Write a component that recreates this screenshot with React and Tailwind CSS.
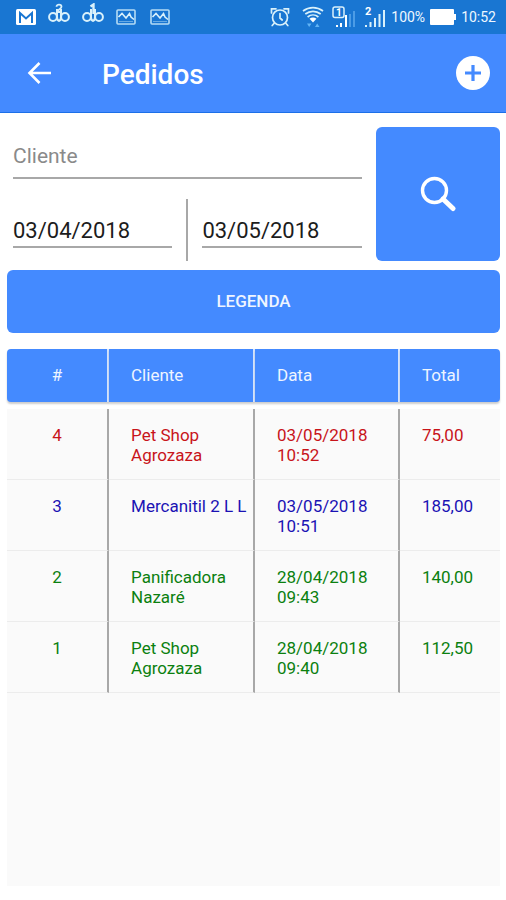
import React from "react";

const orders = [
  { id: "4", client: "Pet Shop Agrozaza", date: "03/05/2018 10:52", total: "75,00", tone: "text-[#c8141a]" },
  { id: "3", client: "Mercanitil 2 L L", date: "03/05/2018 10:51", total: "185,00", tone: "text-[#1a12b4]" },
  { id: "2", client: "Panificadora Nazaré", date: "28/04/2018 09:43", total: "140,00", tone: "text-[#0b800f]" },
  { id: "1", client: "Pet Shop Agrozaza", date: "28/04/2018 09:40", total: "112,50", tone: "text-[#0b800f]" },
];

function MailIcon() {
  return (
    <svg className="h-4 w-5" viewBox="0 0 20 16" aria-hidden="true">
      <rect width="20" height="16" rx="1.5" fill="#fff" />
      <path d="M4 14V4l6 5.500L16 4v10" fill="none" stroke="#1976d2" strokeWidth="2" />
    </svg>
  );
}

function LoopIcon({ variant }) {
  return (
    <svg className="h-5 w-[22px]" viewBox="0 0 22 20" fill="none" stroke="#d9f1fb" strokeWidth="2" aria-hidden="true">
      <circle cx="5" cy="14" r="3.900" />
      <circle cx="17" cy="14" r="3.900" />
      <path d="M9 6v8c0 2.600 1 3.900 2.500 3.900M13 6v8c0 2.600-1 3.900-2.500 3.900" />
      {variant === "one" ? (
        <path d="M8.500 3.500 11.500 1.500V11" strokeWidth="2.400" />
      ) : (
        <path d="M8.500 3.800c0-3 5-3 5 0 0 2-3.500 2.700-4.500 5.200h5" strokeWidth="1.800" />
      )}
    </svg>
  );
}

function PictureIcon() {
  return (
    <svg className="h-4 w-5" viewBox="0 0 20 16" fill="none" stroke="#b5dcf5" strokeWidth="1.600" aria-hidden="true">
      <rect x="1" y="1" width="18" height="14" rx="1" />
      <path d="M2.500 8 6 4.500l4 4.500 3.500-4.500 1.500 3.500 3 2.500" stroke="#d9f1fb" />
      <path d="M3 12.500h14" strokeWidth="1" opacity=".5" />
    </svg>
  );
}

function AlarmIcon() {
  return (
    <svg className="h-5 w-5" viewBox="0 0 20 20" fill="none" stroke="#d9f1fb" strokeWidth="1.700" strokeLinecap="round" aria-hidden="true">
      <circle cx="10" cy="10.500" r="7.500" />
      <path d="M10 6.500v4.500l2.200 2M1.500 6V1.800H6M18.500 6V1.800H14M4 16.500l-1.800 2M16 16.500l1.800 2" />
    </svg>
  );
}

function WifiIcon() {
  return (
    <svg className="h-[22px] w-[22px]" viewBox="0 0 22 22" fill="none" stroke="#d9f1fb" strokeWidth="1.700" aria-hidden="true">
      <path d="M1 5c6-4.500 14-4.500 20 0M3.300 8c4.600-3.600 10.800-3.600 15.400 0M5.600 11c3.200-2.700 7.600-2.700 10.800 0" />
      <path d="M7.500 12.800c2.200-1.600 4.800-1.600 7 0L11 16.500z" fill="#fff" stroke="none" />
      <path d="M5 17.500h4.500L7.200 21zM13 21l2.200-3.500 2.300 3.500z" fill="#62b4f5" stroke="none" />
    </svg>
  );
}

function SignalOneIcon() {
  return (
    <svg className="h-[22px] w-6" viewBox="0 0 24 22" aria-hidden="true">
      <rect x="1" y="1" width="11" height="10.500" rx="2" fill="none" stroke="#d9f1fb" strokeWidth="1.500" />
      <text x="4" y="10" fill="#fff" fontFamily="Roboto, sans-serif" fontSize="10" fontWeight="700">1</text>
      <path d="M5 21v-2M9 21v-4M14 21V9" stroke="#fff" strokeWidth="2" />
      <path d="M18 21V8M22 21V5" stroke="#4c9ce6" strokeWidth="2" />
    </svg>
  );
}

function SignalTwoIcon() {
  return (
    <svg className="h-[22px] w-[22px]" viewBox="0 0 22 22" aria-hidden="true">
      <text x="1" y="9" fill="#fff" fontFamily="Roboto, sans-serif" fontSize="11" fontWeight="700">2</text>
      <path d="M2 21v-2M6.500 21v-5M11 21v-9M15.500 21V8M20 21V4" stroke="#d9f1fb" strokeWidth="2" />
    </svg>
  );
}

function BatteryIcon() {
  return (
    <svg className="h-4 w-[26px]" viewBox="0 0 26 16" aria-hidden="true">
      <rect width="24" height="16" rx="1" fill="#fff" />
      <rect x="24" y="5" width="2" height="6" fill="#fff" />
    </svg>
  );
}

function StatusBar() {
  return (
    <div className="flex h-[34px] items-center justify-between bg-[#1976d2] pr-[10px] pl-4 text-sm text-[#eef8ff]">
      <div className="flex items-center gap-3">
        <MailIcon />
        <div className="flex gap-3 pb-2">
          <LoopIcon variant="two" />
          <LoopIcon variant="one" />
        </div>
        <div className="flex gap-[14px]">
          <PictureIcon />
          <PictureIcon />
        </div>
      </div>
      <div className="flex items-center gap-[5px]">
        <div className="flex items-center gap-2">
          <div className="flex items-center gap-3">
            <AlarmIcon />
            <WifiIcon />
          </div>
          <SignalOneIcon />
          <SignalTwoIcon />
        </div>
        <span>100%</span>
        <BatteryIcon />
        <span>10:52</span>
      </div>
    </div>
  );
}

function AppBar() {
  return (
    <header className="flex h-[79px] items-center border-b border-[#1c6fe8] bg-[#448aff] pr-4 pl-[27px] text-white">
      <button type="button" aria-label="Voltar" className="mr-[51px]">
        <svg className="h-6 w-6" viewBox="0 0 24 24" fill="none" stroke="currentColor" strokeWidth="2.600" aria-hidden="true">
          <path d="M24 12H3M12.500 2 2.500 12l10 10" />
        </svg>
      </button>
      <h1 className="flex-1 pt-1 text-[28px] leading-8 font-medium">Pedidos</h1>
      <button type="button" aria-label="Adicionar pedido">
        <svg className="h-[34px] w-[34px]" viewBox="0 0 34 34" aria-hidden="true">
          <circle cx="17" cy="17" r="17" fill="#fff" />
          <path d="M17 9v16M9 17h16" stroke="#448aff" strokeWidth="3.200" />
        </svg>
      </button>
    </header>
  );
}

function Filters() {
  return (
    <form className="flex" onSubmit={(event) => event.preventDefault()}>
      <div className="flex min-w-0 flex-1 flex-col pr-[14px] pl-[6px]">
        <input
          type="text"
          aria-label="Cliente"
          placeholder="Cliente"
          className="h-[52px] w-full border-b-2 border-[#a8a8a8] pt-2 text-[21px] outline-none placeholder:text-[#8a8a8a]"
        />
        <div className="mt-5 flex h-[62px] items-start gap-[14px]">
          <input
            type="text"
            aria-label="Data inicial"
            defaultValue="03/04/2018"
            className="h-[49px] w-0 flex-1 border-b-2 border-[#a8a8a8] pt-4 text-[22px] text-[#1c1c1c] outline-none"
          />
          <div className="w-[2px] self-stretch bg-[#a8a8a8]" />
          <input
            type="text"
            aria-label="Data final"
            defaultValue="03/05/2018"
            className="h-[49px] w-0 flex-1 border-b-2 border-[#a8a8a8] pt-4 text-[22px] text-[#1c1c1c] outline-none"
          />
        </div>
      </div>
      <button
        type="submit"
        aria-label="Pesquisar"
        className="flex w-[25.2%] items-center justify-center rounded-md bg-[#448aff]"
      >
        <svg className="h-9 w-9" viewBox="0 0 36 36" fill="none" stroke="#fff" aria-hidden="true">
          <circle cx="14.500" cy="14.500" r="12" strokeWidth="3.400" />
          <path d="m23 23 10 9.500" strokeWidth="5" strokeLinecap="round" />
        </svg>
      </button>
    </form>
  );
}

function OrdersTable() {
  const head = "border-r-2 border-[#d5e5ff] bg-[#448aff] pb-[2px] font-normal shadow-[0_2px_2px_#00000033]";
  const cell = "border-r-2 border-b border-r-[#a8a8a8] border-b-[#ececec] bg-[#fafafa] pt-4 pb-[14px] align-top";
  return (
    <table className="w-full table-fixed border-separate border-spacing-0 text-[17px] leading-5">
      <colgroup>
        <col className="w-[20.7%]" />
        <col className="w-[29.6%]" />
        <col className="w-[29.4%]" />
        <col />
      </colgroup>
      <thead className="text-left text-[#eef5ff]">
        <tr className="h-[53px]">
          <th scope="col" className={`${head} rounded-l-sm text-center`}>#</th>
          <th scope="col" className={`${head} pl-[22px]`}>Cliente</th>
          <th scope="col" className={`${head} pl-[22px]`}>Data</th>
          <th scope="col" className="rounded-r-sm bg-[#448aff] pb-[2px] pl-[22px] font-normal shadow-[0_2px_2px_#00000033]">Total</th>
        </tr>
      </thead>
      <tbody className="before:block before:h-[7px] before:content-['']">
        {orders.map((order) => (
          <tr key={order.id} className={order.tone}>
            <td className={`${cell} text-center`}>{order.id}</td>
            <td className={`${cell} pl-[22px]`}>{order.client}</td>
            <td className={`${cell} pl-[22px]`}>{order.date}</td>
            <td className="border-b border-[#ececec] bg-[#fafafa] pt-4 pb-[14px] pl-[22px] align-top">{order.total}</td>
          </tr>
        ))}
      </tbody>
    </table>
  );
}

export default function App() {
  return (
    <div className="flex min-h-screen flex-col bg-white font-[Roboto,sans-serif]">
      <StatusBar />
      <AppBar />
      <main className="flex flex-1 flex-col pt-[14px] pr-[6px] pb-[14px] pl-[7px]">
        <Filters />
        <button
          type="button"
          className="mt-[9px] mb-4 h-[63px] rounded-md bg-[#448aff] text-[17px] font-medium text-[#eef5ff]"
        >
          LEGENDA
        </button>
        <OrdersTable />
        <div className="flex-1 bg-[#fafafa]" />
      </main>
    </div>
  );
}
